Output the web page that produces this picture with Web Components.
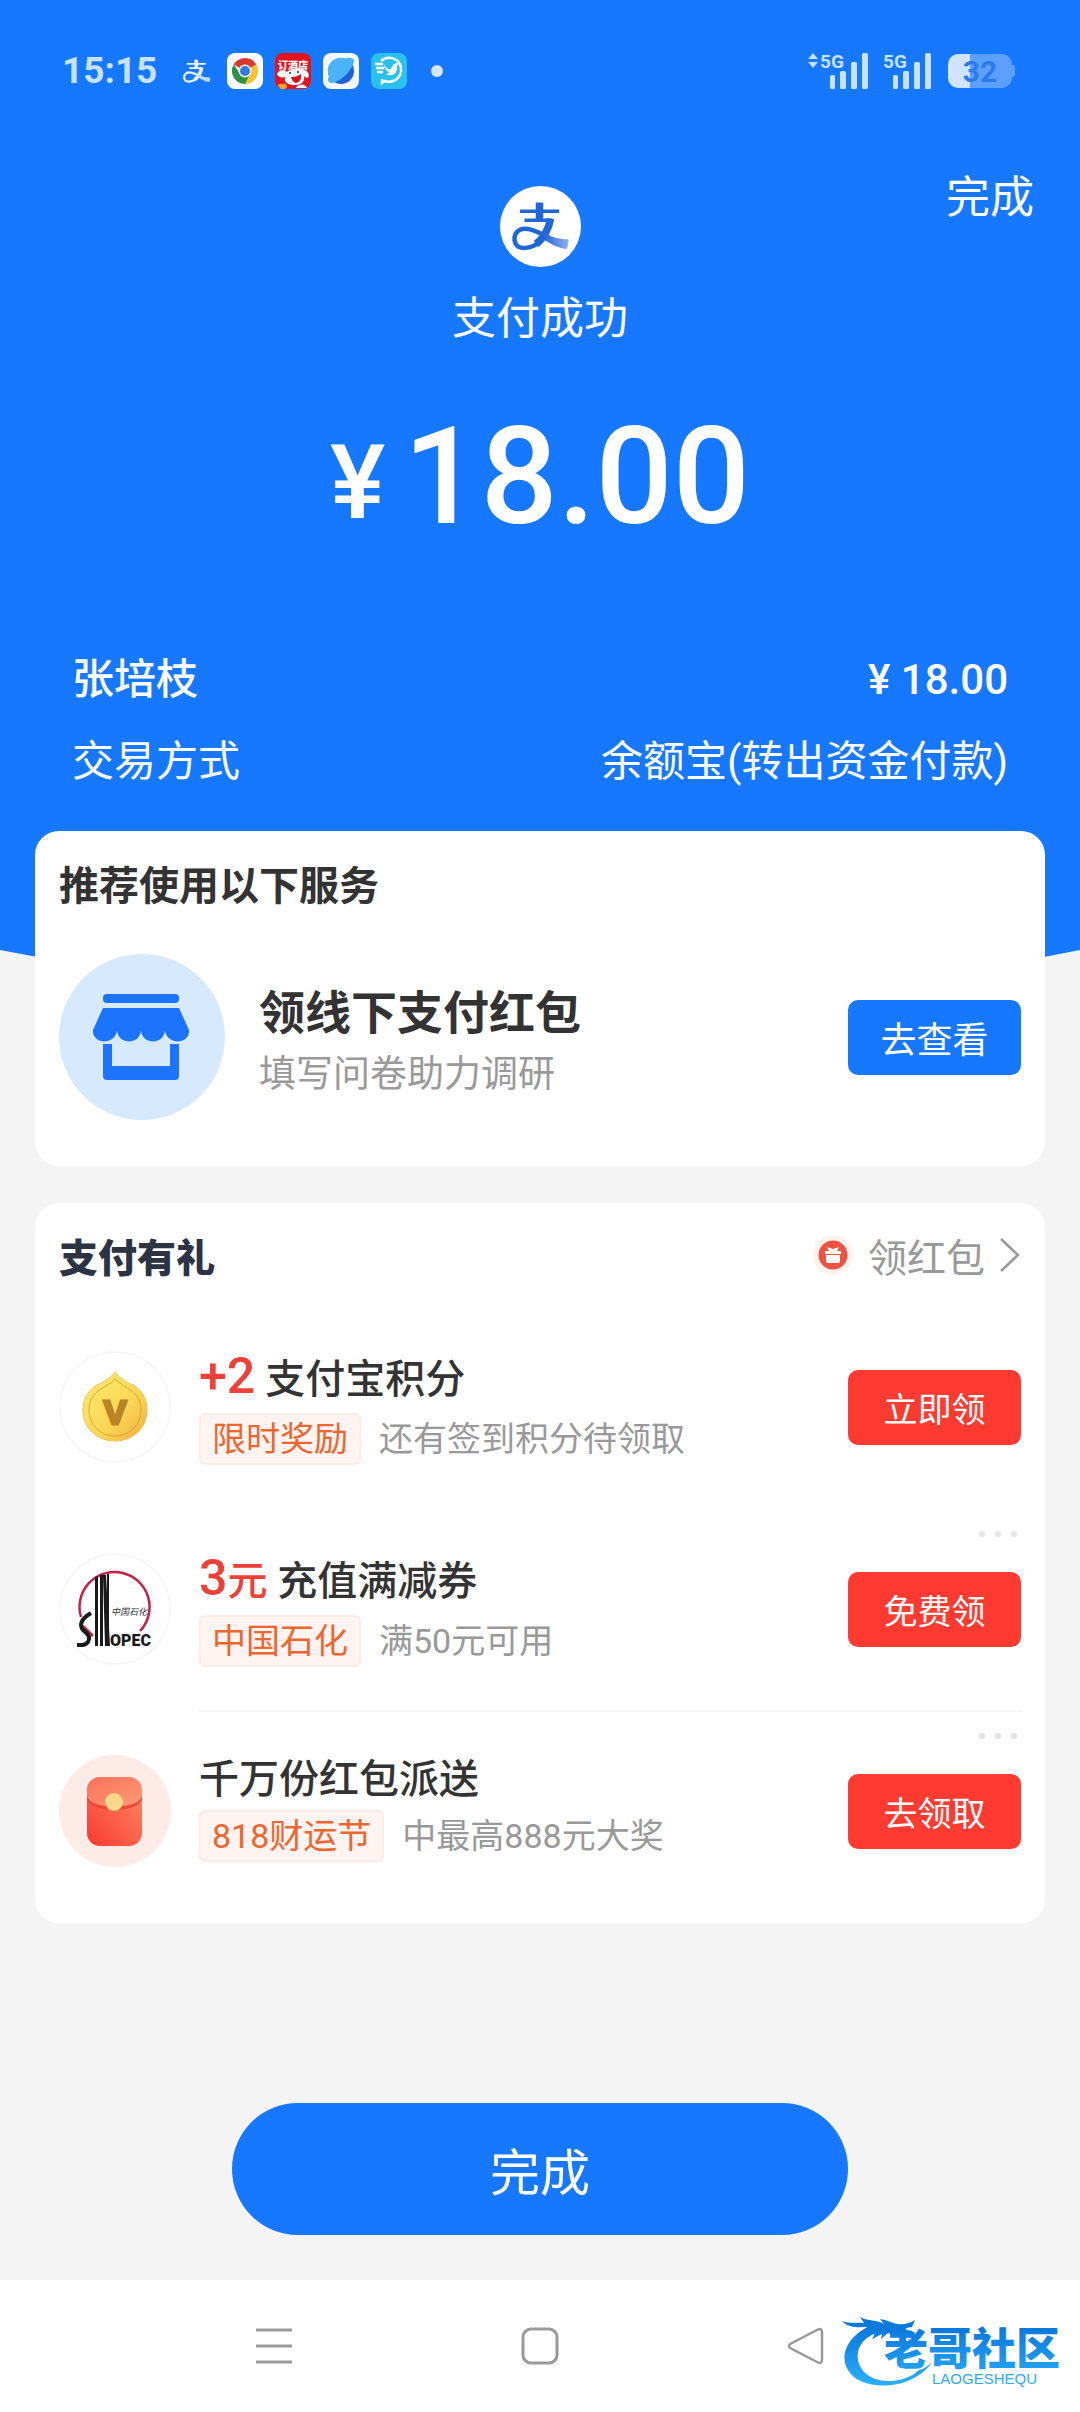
<!DOCTYPE html>
<html lang="zh-CN">
<head>
<meta charset="UTF-8">
<meta name="viewport" content="width=device-width, initial-scale=1.0">
<title>支付成功</title>
<style>
  body {
    margin: 0;
    background: #f4f4f4;
    font-family: Roboto, "Noto Sans CJK SC", sans-serif;
    color: #333;
  }
</style>
</head>
<body>
<pay-screen></pay-screen>

<script>
const resetStyles = `
  * {
    box-sizing: border-box;
  }

  h1, h2, h3, p, dl, dd {
    margin: 0;
  }

  button {
    margin: 0;
    padding: 0;
    border: 0;
    background: none;
    font: inherit;
    color: inherit;
    cursor: pointer;
  }

  a {
    color: inherit;
    text-decoration: none;
  }

  svg {
    display: block;
  }
`;

// The Alipay ribbon mark, shared by the status bar and the hero
const alipayMark = (color, tail) => `
  <g fill="none" stroke="${color}">
    <path stroke-width="3.6" d="M20 25.300H59M24.500 34.200H52"/>
    <path stroke-width="7.5" d="M39.500 16.500V34"/>
    <path stroke-width="7.5" d="M50.500 32.600C49 43 43 53 36 58"/>
    <path stroke-width="4.5" d="M39 56.500C31 62.500 19 64.500 15.500 57.500C12 49 18 42.800 25 42.800C33 42.800 40 47.500 49 51.500"/>
  </g>
  <path fill="${tail}" d="M43 46.500C51 51 59 53.500 68.500 53.300C68.500 57 68.200 60 66.500 63C58 62 50 58 42 52Z"/>`;

const signalIcon = `
  <svg width="50" height="48" viewBox="0 -6 50 48" fill="#c6e2ff">
    <text x="1" y="15" font-family="Roboto, sans-serif" font-size="19" font-weight="700">5G</text>
    <rect x="11" y="22" width="5" height="14" rx="1.500"/>
    <rect x="21" y="18" width="6" height="18" rx="1.500"/>
    <rect x="32" y="9" width="6" height="27" rx="1.500"/>
    <rect x="43" y="0" width="6" height="36" rx="1.500"/>
  </svg>`;

class StatusBar extends HTMLElement {
  connectedCallback() {
    this.attachShadow({ mode: 'open' });
    this.shadowRoot.innerHTML = `
      <style>
        ${resetStyles}

        :host {
          display: flex;
          align-items: center;
          justify-content: space-between;
          box-sizing: border-box;
          height: 142px;
          padding: 0 68px 0 62px;
          color: #c6e2ff;
        }

        .left, .right, .signals {
          display: flex;
          align-items: center;
        }

        .left {
          gap: 12px;
        }

        .right {
          gap: 16px;
        }

        time {
          margin-right: 14px;
          font-size: 37px;
          font-weight: 700;
          line-height: 40px;
        }

        .alipay {
          margin-right: 4px;
        }

        .dot {
          width: 12px;
          height: 12px;
          margin-left: 12px;
          border-radius: 50%;
          background: #d4e6ff;
        }

        .signals svg:last-child {
          margin-left: 13px;
        }

        .battery {
          position: relative;
          width: 64px;
          height: 34px;
          border-radius: 10px;
          background: linear-gradient(90deg, #d0e4ff 22px, #5c9fff 22px);
          color: #2b7bea;
          font-size: 30px;
          font-weight: 700;
          line-height: 35px;
          text-align: center;
        }

        .battery::after {
          content: '';
          position: absolute;
          top: 11px;
          right: -3px;
          width: 3px;
          height: 12px;
          border-radius: 0 2px 2px 0;
          background: #5c9fff;
        }
      </style>

      <div class="left">
        <time>15:15</time>
        <svg class="alipay" width="28" height="26" viewBox="12 14 58 52">${alipayMark('#eaf6ff', '#b9d9ff')}</svg>
        <svg width="36" height="36" viewBox="0 0 36 36">
          <rect width="36" height="36" rx="8" fill="#fff"/>
          <path fill="#d93a2e" d="M18 18L6.700 11.500A13 13 0 0 1 29.300 11.500Z"/>
          <path fill="#f9c22e" d="M18 18L29.300 11.500A13 13 0 0 1 18 31Z"/>
          <path fill="#2f9148" d="M6.700 11.500A13 13 0 0 0 18 31L23 21L12.500 20Z"/>
          <circle cx="18" cy="18" r="6.500" fill="#fff"/>
          <circle cx="18" cy="18" r="5" fill="#3478e5"/>
        </svg>
        <svg width="36" height="36" viewBox="0 0 36 36">
          <rect width="36" height="36" rx="8" fill="#e5141c"/>
          <text x="18" y="16" font-family="Noto Sans CJK SC, sans-serif" font-size="10" font-weight="900" text-anchor="middle" fill="#fff">订酒店</text>
          <path fill="#fff" d="M2 21C4 16 9 16 12 19C15 16 25 14 29 17C33 18 35 21 33 25C31 25 30 24 29 23C30 29 26 32 20 32C13 32 9 30 10 24C6 25 3 24 2 21ZM22 33Q29 29 32 35H21Z"/>
          <path fill="#d31322" d="M16 24Q22 24 26 21Q27 29 21 30Q17 29 16 24Z"/>
          <circle cx="15" cy="20" r="1" fill="#222"/>
          <circle cx="23" cy="19" r="1" fill="#222"/>
          <path fill="#f7a52a" d="M3 33Q3 30 7 31Q11 29 12 34L10 36H6Z"/>
        </svg>
        <svg width="36" height="36" viewBox="0 0 36 36">
          <rect width="36" height="36" rx="8" fill="#f3f8ff"/>
          <circle cx="18" cy="18" r="13" fill="#2161d8"/>
          <path fill="#4bb3f7" d="M6 23A13 13 0 0 1 22 5.500C26 4 31 5 31 8C30 15 20 28 9 30C5 30 4 27 6 23Z"/>
        </svg>
        <svg width="36" height="36" viewBox="0 0 36 36">
          <rect width="36" height="36" rx="8" fill="#29c1ee"/>
          <g fill="none" stroke="#fff" stroke-width="2.500">
            <path d="M10 8A12 12 0 1 1 14 28L11 30V26M4 11H12M5 15H13M6 19H12"/>
          </g>
          <path fill="#fff" d="M13 11Q15 17 20 16Q22 9 28 10Q25 13 26 16Q24 25 14 21Q18 21 18 19Q13 17 13 11Z"/>
        </svg>
        <span class="dot"></span>
      </div>

      <div class="right">
        <div class="signals">
          <svg width="12" height="48" viewBox="0 -6 12 48" fill="#c6e2ff"><path d="M1 6L6 0L11 6ZM1 9H11L6 15Z"/></svg>
          ${signalIcon}
          ${signalIcon}
        </div>
        <div class="battery">32</div>
      </div>
    `;
  }
}

class PayHero extends HTMLElement {
  connectedCallback() {
    this.attachShadow({ mode: 'open' });
    this.shadowRoot.innerHTML = `
      <style>
        ${resetStyles}

        :host {
          display: block;
          color: #fff;
        }

        .panel {
          padding-bottom: 160px;
          background: #1677ff;
        }

        .top {
          display: grid;
          grid-template-columns: 1fr auto 1fr;
          padding: 32px 46px 0;
          font-size: 44px;
        }

        .result {
          grid-column: 2;
          display: flex;
          flex-direction: column;
          align-items: center;
          gap: 24px;
          padding-top: 12px;
        }

        .result h1 {
          font-size: 44px;
          font-weight: 400;
          line-height: 56px;
        }

        .done {
          justify-self: end;
          align-self: start;
          line-height: 48px;
        }

        .amount {
          display: flex;
          justify-content: center;
          align-items: center;
          gap: 18px;
          margin-top: 60px;
          font-size: 136px;
          font-weight: 500;
          line-height: 140px;
        }

        .amount small {
          padding-top: 12px;
          font-size: 104px;
          line-height: 128px;
        }

        dl {
          display: grid;
          gap: 26px;
          margin-top: 105px;
          padding: 0 72px;
          font-size: 42px;
          line-height: 56px;
        }

        dl div {
          display: flex;
          justify-content: space-between;
        }

        .payee {
          font-weight: 500;
        }

        .curve {
          width: 100%;
          height: 54px;
        }
      </style>

      <div class="panel">
        <slot></slot>
        <div class="top">
          <div class="result">
            <svg width="81" height="81" viewBox="0 0 81 81">
              <defs>
                <linearGradient id="tail"><stop offset="0" stop-color="#1a5fd0"/><stop offset="1" stop-color="#8db4f2"/></linearGradient>
              </defs>
              <circle cx="40.500" cy="40.500" r="40.500" fill="#fff"/>
              ${alipayMark('#1f66d6', 'url(#tail)')}
            </svg>
            <h1>支付成功</h1>
          </div>
          <a class="done" href="#">完成</a>
        </div>
        <p class="amount"><small>¥</small>18.00</p>
        <dl>
          <div class="payee"><dt>张培枝</dt><dd>¥ 18.00</dd></div>
          <div><dt>交易方式</dt><dd>余额宝(转出资金付款)</dd></div>
        </dl>
      </div>
      <svg class="curve" viewBox="0 0 1080 54" preserveAspectRatio="none"><path fill="#1677ff" d="M0 0Q540 108 1080 0Z"/></svg>
    `;
  }
}

class SectionCard extends HTMLElement {
  connectedCallback() {
    this.attachShadow({ mode: 'open' });
    this.shadowRoot.innerHTML = `
      <style>
        ${resetStyles}

        :host {
          display: block;
          padding: 0 24px;
          border-radius: 24px;
          background: #fff;
        }

        header {
          display: flex;
          align-items: center;
          justify-content: space-between;
          height: 103px;
        }
      </style>

      <header><slot name="title"></slot><slot name="more"></slot></header>
      <slot></slot>
    `;
  }
}

class ActionButton extends HTMLElement {
  connectedCallback() {
    this.attachShadow({ mode: 'open' });
    this.shadowRoot.innerHTML = `
      <style>
        ${resetStyles}

        :host {
          display: block;
          flex: none;
        }

        button {
          display: block;
          width: 173px;
          height: 75px;
          border-radius: 10px;
          background: var(--action-color, #ff3a30);
          color: #fff;
          font-size: var(--action-size, 34px);
        }
      </style>

      <button type="button"><slot></slot></button>
    `;
  }
}

class ServiceRow extends HTMLElement {
  connectedCallback() {
    this.attachShadow({ mode: 'open' });
    this.shadowRoot.innerHTML = `
      <style>
        ${resetStyles}

        :host {
          display: flex;
          align-items: center;
          box-sizing: border-box;
          height: 232px;
          padding-bottom: 26px;
          --action-color: #1677ff;
          --action-size: 36px;
        }

        .text {
          flex: 1;
          margin-left: 34px;
          padding-top: 12px;
        }

        h3 {
          font-size: 46px;
          font-weight: 700;
          line-height: 64px;
        }

        p {
          color: #999;
          font-size: 37px;
          line-height: 60px;
        }
      </style>

      <svg width="166" height="166" viewBox="0 0 166 166">
        <circle cx="83" cy="83" r="83" fill="#d7e9fd"/>
        <g fill="#1b74fb">
          <rect x="44" y="40" width="76" height="9" rx="4"/>
          <path d="M44 54H120L130 76C131 90 109 92 106 77C104 91 84 91 82 77C80 91 60 91 58 77C55 92 33 90 34 76Z"/>
          <path d="M44 90H53V112H111V90H120V122Q120 126 116 126H48Q44 126 44 122Z"/>
        </g>
      </svg>
      <div class="text">
        <h3>领线下支付红包</h3>
        <p>填写问卷助力调研</p>
      </div>
      <action-button>去查看</action-button>
    `;
  }
}

const giftIcons = {
  coin: `
    <defs>
      <linearGradient id="gold" x1="0" y1="0" x2="1" y2="1"><stop offset="0" stop-color="#ffec6e"/><stop offset=".6" stop-color="#fbd655"/><stop offset="1" stop-color="#f0ac3f"/></linearGradient>
    </defs>
    <circle cx="56" cy="56" r="55" fill="#fff" stroke="#f5f5f5" stroke-width="1.500"/>
    <path fill="url(#gold)" stroke="#efc154" d="M56 21C60 27 67 31 76 35C84 41 88 49 88 59C88 77 74 90 56 90C38 90 24 77 24 59C24 49 28 41 36 35C45 31 52 27 56 21Z"/>
    <path fill="none" stroke="#d9a634" d="M56 28C61 33 67 36 73 40C79 45 82 51 82 59C82 74 70 85 56 85C42 85 30 74 30 59C30 51 33 45 39 40C45 36 51 33 56 28Z"/>
    <text x="56" y="73" font-family="Liberation Sans, sans-serif" font-size="34" font-weight="700" text-anchor="middle" fill="#b98425" stroke="#b98425" stroke-width="3">V</text>`,
  sinopec: `
    <circle cx="56" cy="56" r="55" fill="#fff" stroke="#f5f5f5" stroke-width="1.500"/>
    <path fill="none" stroke="#c41f45" stroke-width="2.500" d="M22 64A35 35 0 1 1 81 78M24 73L34 83"/>
    <path fill="#1a1a1a" d="M36 24L39 23V93H36ZM41 22H44V93H41ZM44 22H47L51 93H46ZM48 21H50V78L48 60Z"/>
    <path fill="none" stroke="#1a1a1a" stroke-width="4" d="M32 60C22 66 20 72 24 77C31 82 31 86 29 89C26 93 22 92 18 92"/>
    <text x="51" y="93" font-family="Roboto, sans-serif" font-size="16" font-weight="900" fill="#1a1a1a">OPEC</text>
    <text x="52" y="62" font-family="Noto Sans CJK SC, sans-serif" font-size="9" font-style="italic" fill="#333">中国石化</text>`,
  packet: `
    <defs>
      <linearGradient id="body" x1="1" y1="0" x2="0" y2="1"><stop offset="0" stop-color="#ff8d68"/><stop offset="1" stop-color="#f93a2e"/></linearGradient>
      <linearGradient id="flap" x1="0" y1="0" x2="1" y2="1"><stop offset="0" stop-color="#fb7059"/><stop offset="1" stop-color="#ff9b77"/></linearGradient>
    </defs>
    <circle cx="56" cy="56" r="56" fill="#feeae6"/>
    <rect x="28" y="22" width="55" height="69" rx="13" fill="url(#body)"/>
    <path fill="#ea4938" d="M28 40Q30 51 55 52Q81 51 83 40V44Q80 54 55 55Q31 54 28 44Z"/>
    <path fill="url(#flap)" d="M28 41C28 28 32 22 44 22H67C79 22 83 28 83 41C80 49 70 51 55 51C41 51 31 49 28 41Z"/>
    <circle cx="55" cy="47" r="9" fill="#fbd78a"/>`
};

class GiftItem extends HTMLElement {
  connectedCallback() {
    const icon = this.getAttribute('icon');
    const more = this.hasAttribute('closable')
      ? '<button class="dots" type="button" aria-label="更多"><i></i><i></i><i></i></button>'
      : '';
    this.attachShadow({ mode: 'open' });
    this.shadowRoot.innerHTML = `
      <style>
        ${resetStyles}

        :host {
          position: relative;
          display: flex;
          align-items: center;
          height: 202px;
        }

        :host([divided])::before {
          content: '';
          position: absolute;
          top: 0;
          left: 140px;
          right: 0;
          height: 2px;
          background: #f6f6f6;
        }

        .text {
          flex: 1;
          margin-left: 28px;
          padding-top: 2px;
        }

        h3 {
          margin-bottom: 12px;
          font-size: 40px;
          font-weight: 500;
          line-height: 36px;
        }

        .line {
          display: flex;
          align-items: center;
          gap: 18px;
          font-size: 34px;
          line-height: 48px;
          color: #999;
        }

        .tag {
          padding: 0 11px;
          border: 2px solid #fdebe6;
          border-radius: 6px;
          background: #fff4f1;
          color: #ed662f;
        }

        .dots {
          position: absolute;
          top: 16px;
          right: 0;
          display: flex;
          gap: 10px;
          padding: 7px 4px;
        }

        .dots i {
          width: 6px;
          height: 6px;
          border-radius: 50%;
          background: #e4e4e4;
        }
      </style>

      <svg width="112" height="112" viewBox="0 0 112 112">${giftIcons[icon]}</svg>
      <div class="text">
        <h3><slot name="title"></slot></h3>
        <div class="line"><span class="tag"><slot name="tag"></slot></span><slot name="desc"></slot></div>
      </div>
      <action-button><slot name="action"></slot></action-button>
      ${more}
    `;
  }
}

class SystemNav extends HTMLElement {
  connectedCallback() {
    this.attachShadow({ mode: 'open' });
    this.shadowRoot.innerHTML = `
      <style>
        ${resetStyles}

        :host {
          position: relative;
          display: grid;
          grid-template-columns: repeat(3, 1fr);
          place-items: center;
          height: 132px;
          padding: 0 13%;
          background: #fff;
        }

        .badge {
          position: absolute;
          top: 32px;
          right: 12px;
        }
      </style>

      <button type="button" aria-label="最近任务">
        <svg width="40" height="40" viewBox="0 0 40 40" stroke="#999" stroke-width="3"><path d="M2 4H38M2 20H38M2 36H38"/></svg>
      </button>
      <button type="button" aria-label="主屏幕">
        <svg width="40" height="40" viewBox="0 0 40 40" fill="none" stroke="#999" stroke-width="3"><rect x="3" y="3" width="34" height="34" rx="8"/></svg>
      </button>
      <button type="button" aria-label="返回">
        <svg width="40" height="40" viewBox="0 0 40 40" fill="none" stroke="#999" stroke-width="2.500" stroke-linejoin="round"><path d="M5 17.500L32 3.500Q36 2 36 6V34Q36 38 32 36.500L5 22.500Q1 20 5 17.500Z"/></svg>
      </button>
      <svg class="badge" width="226" height="84" viewBox="0 0 226 84">
        <defs>
          <linearGradient id="sky" x1="0" y1="0" x2="0" y2="78" gradientUnits="userSpaceOnUse"><stop offset=".2" stop-color="#0b78dc"/><stop offset="1" stop-color="#2cb4fb"/></linearGradient>
        </defs>
        <g fill="url(#sky)">
          <path d="M30 13C8 22 -4 42 6 58C18 80 70 80 90 50C86 54 82 57 77 58C60 74 28 72 19 56C10 40 20 24 38 20Z"/>
          <path d="M0 9C8 12 15 10 22 11L18 5C27 10 34 7 42 12L38 7C45 8 50 11 55 12C62 13 68 11 73 8L70 15L58 17L71 19L66 24C60 20 55 21 52 23L46 21L39 27L40 22L30 27L33 21L22 22L28 15C18 15 7 17 0 9Z"/>
          <text x="42" y="53" font-family="Noto Sans CJK SC, sans-serif" font-size="44" font-weight="900">老哥社区</text>
          <text x="90" y="72" font-family="Liberation Sans, sans-serif" font-size="15">LAOGESHEQU</text>
        </g>
      </svg>
    `;
  }
}

class PayScreen extends HTMLElement {
  connectedCallback() {
    this.attachShadow({ mode: 'open' });
    this.shadowRoot.innerHTML = `
      <style>
        ${resetStyles}

        :host {
          display: flex;
          flex-direction: column;
          min-height: 100vh;
        }

        main {
          position: relative;
          display: grid;
          gap: 37px;
          margin-top: -173px;
          padding: 0 35px;
        }

        section-card:last-child {
          padding-bottom: 11px;
        }

        h2 {
          font-size: 40px;
          font-weight: 700;
        }

        .brand {
          color: #2b3344;
          font-size: 39px;
          font-weight: 900;
        }

        .more {
          display: flex;
          align-items: center;
          color: #999;
          font-size: 39px;
        }

        .more svg:first-child {
          margin-right: 15px;
        }

        .more svg:last-child {
          margin-left: 14px;
        }

        em {
          color: #ee4036;
          font-style: normal;
        }

        em b {
          font-size: 50px;
          font-weight: 500;
          line-height: 50px;
        }

        .finish {
          width: 57%;
          height: 132px;
          margin: auto auto 45px;
          border-radius: 66px;
          background: #1677ff;
          color: #fff;
          font-size: 50px;
        }
      </style>

      <pay-hero><status-bar></status-bar></pay-hero>
      <main>
        <section-card>
          <h2 slot="title">推荐使用以下服务</h2>
          <service-row></service-row>
        </section-card>
        <section-card>
          <h2 class="brand" slot="title">支付有礼</h2>
          <a class="more" slot="more" href="#">
            <svg width="40" height="40" viewBox="0 0 40 40">
              <circle cx="20" cy="20" r="20" fill="#fff3ee"/>
              <circle cx="20" cy="20" r="14.500" fill="#ef5240"/>
              <path fill="#fff" d="M12 16H28V19H12ZM13 20H27V26Q27 28 25 28H15Q13 28 13 26ZM14 12L20 14L26 12L24 16H16Z"/>
            </svg>
            领红包
            <svg width="22" height="38" viewBox="0 0 22 38" fill="none" stroke="#999" stroke-width="2.500"><path d="M2 3L19 19L2 35"/></svg>
          </a>
          <gift-item icon="coin">
            <span slot="title"><em><b>+2</b></em> 支付宝积分</span>
            <span slot="tag">限时奖励</span>
            <span slot="desc">还有签到积分待领取</span>
            <span slot="action">立即领</span>
          </gift-item>
          <gift-item icon="sinopec" closable>
            <span slot="title"><em><b>3</b>元</em> 充值满减券</span>
            <span slot="tag">中国石化</span>
            <span slot="desc">满50元可用</span>
            <span slot="action">免费领</span>
          </gift-item>
          <gift-item icon="packet" closable divided>
            <span slot="title">千万份红包派送</span>
            <span slot="tag">818财运节</span>
            <span slot="desc">中最高888元大奖</span>
            <span slot="action">去领取</span>
          </gift-item>
        </section-card>
      </main>
      <button class="finish" type="button">完成</button>
      <system-nav></system-nav>
    `;
  }
}

customElements.define('status-bar', StatusBar);
customElements.define('pay-hero', PayHero);
customElements.define('section-card', SectionCard);
customElements.define('action-button', ActionButton);
customElements.define('service-row', ServiceRow);
customElements.define('gift-item', GiftItem);
customElements.define('system-nav', SystemNav);
customElements.define('pay-screen', PayScreen);
</script>
</body>
</html>
